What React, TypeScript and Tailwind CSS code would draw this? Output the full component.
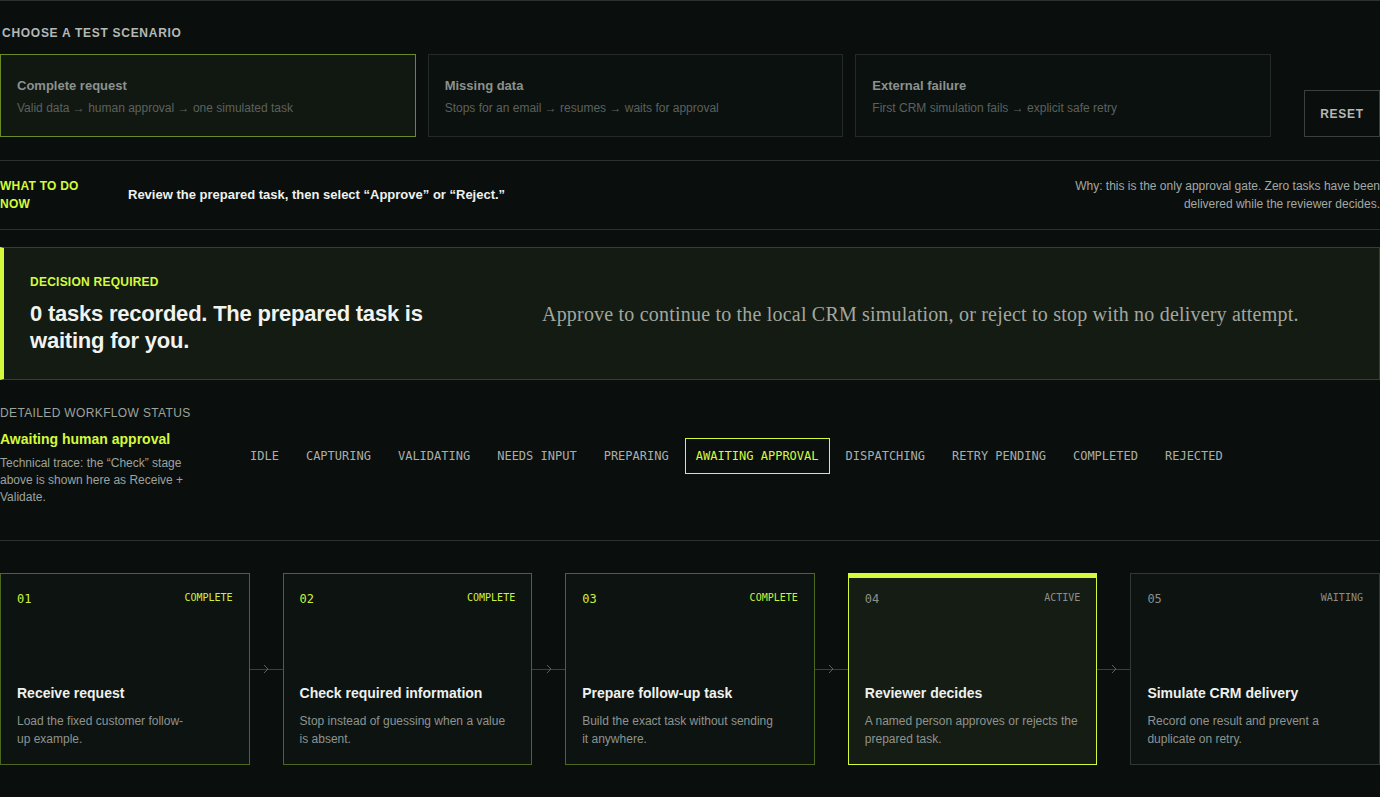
import React from "react";

const sans = "font-['Liberation_Sans','Helvetica_Neue',Arial,sans-serif]";
const mono = "font-['DejaVu_Sans_Mono','Liberation_Mono',monospace]";

const scenarios = [
  { title: "Complete request", sub: "Valid data → human approval → one simulated task", active: true },
  { title: "Missing data", sub: "Stops for an email → resumes → waits for approval", active: false },
  { title: "External failure", sub: "First CRM simulation fails → explicit safe retry", active: false },
];

const states = [
  "IDLE",
  "CAPTURING",
  "VALIDATING",
  "NEEDS INPUT",
  "PREPARING",
  "AWAITING APPROVAL",
  "DISPATCHING",
  "RETRY PENDING",
  "COMPLETED",
  "REJECTED",
];

type Step = { n: string; status: string; title: string; desc: string; kind: "done" | "active" | "wait" };
const steps: Step[] = [
  { n: "01", status: "COMPLETE", title: "Receive request", desc: "Load the fixed customer follow-up example.", kind: "done" },
  { n: "02", status: "COMPLETE", title: "Check required information", desc: "Stop instead of guessing when a value is absent.", kind: "done" },
  { n: "03", status: "COMPLETE", title: "Prepare follow-up task", desc: "Build the exact task without sending it anywhere.", kind: "done" },
  { n: "04", status: "ACTIVE", title: "Reviewer decides", desc: "A named person approves or rejects the prepared task.", kind: "active" },
  { n: "05", status: "WAITING", title: "Simulate CRM delivery", desc: "Record one result and prevent a duplicate on retry.", kind: "wait" },
];

function Connector() {
  return (
    <div className="relative w-[33px] shrink-0 self-stretch flex items-center">
      <div className="h-px w-full bg-[#3a403c]" />
      <svg
        className="absolute left-1/2 top-1/2 -translate-x-1/2 -translate-y-1/2"
        width="7"
        height="10"
        viewBox="0 0 7 10"
      >
        <path d="M1.5 1 L5.5 5 L1.5 9" fill="none" stroke="#5a605c" strokeWidth="1" />
      </svg>
    </div>
  );
}

function StepCard({ s }: { s: Step }) {
  const border =
    s.kind === "done" ? "border-[#4d6620]" : s.kind === "active" ? "border-[#d4fa3c]" : "border-[#323834]";
  const bg = s.kind === "active" ? "bg-[#151c13]" : "bg-[#0d1311]";
  const topColor = s.kind === "done" ? "text-[#cdf23c]" : "text-[#8a8f8c]";
  return (
    <div className={`relative flex-1 h-[192px] border ${border} ${bg} flex flex-col justify-between px-[16px] pt-[17px] pb-[16px]`}>
      {s.kind === "active" && <div className="absolute left-0 right-0 top-0 h-[4px] bg-[#d4fa3c]" />}
      <div className="flex items-start justify-between">
        <span className={`${mono} text-[12px] leading-[16px] ${topColor}`}>{s.n}</span>
        <span className={`${mono} text-[10px] leading-[14px] ${topColor}`}>{s.status}</span>
      </div>
      <div>
        <div className="text-[14px] leading-[20px] font-bold text-[#eef1ee]">{s.title}</div>
        <div className="mt-[9px] text-[12px] leading-[18px] text-[#8e938f] text-pretty">{s.desc}</div>
      </div>
    </div>
  );
}

export default function App() {
  return (
    <div className={`${sans} min-h-[797px] w-[1380px] bg-[#0a0f0d] text-[#e8ece9] overflow-hidden`}>
      {/* Scenario section */}
      <div className="border-t border-[#2c322f] pt-[24px]">
        <div className="pl-[2px] text-[12px] leading-[16px] font-bold tracking-[0.06em] text-[#b4b9b6]">
          CHOOSE A TEST SCENARIO
        </div>
        <div className="mt-[13px] flex items-end gap-3">
          {scenarios.map((sc) => (
            <div
              key={sc.title}
              className={`flex-1 h-[83px] border flex flex-col justify-center px-[16px] ${
                sc.active ? "border-[#6a8a28] bg-[#111811]" : "border-[#242a27] bg-[#0b110f]"
              }`}
            >
              <div className="text-[13px] leading-[20px] font-bold text-[#8c918e]">{sc.title}</div>
              <div className="mt-[4px] text-[12px] leading-[16px] text-[#5b615d]">{sc.sub}</div>
            </div>
          ))}
          <div className="ml-[21px] w-[76px] h-[47px] shrink-0 border border-[#3a403c] flex items-center justify-center text-[12px] font-bold tracking-[0.06em] text-[#b4b9b6]">
            RESET
          </div>
        </div>
      </div>

      {/* What to do */}
      <div className="mt-[23px] border-t border-b border-[#2c322f] h-[70px] flex items-center">
        <div className="w-[128px] shrink-0 text-[12px] leading-[18px] font-bold tracking-[0.02em] text-[#d4fa3c]">
          WHAT TO DO
          <br />
          NOW
        </div>
        <div className="text-[13px] font-semibold text-[#eef1ee]">
          Review the prepared task, then select “Approve” or “Reject.”
        </div>
        <div className="ml-auto text-right text-[12px] leading-[18px] text-[#a3a8a5]">
          Why: this is the only approval gate. Zero tasks have been
          <br />
          delivered while the reviewer decides.
        </div>
      </div>

      {/* Decision panel */}
      <div className="mt-[17px] h-[133px] border border-[#363c38] border-l-[4px] border-l-[#d4fa3c] bg-[#141b13] grid grid-cols-[430px_1fr] gap-[82px] items-center pl-[26px]">
        <div>
          <div className="text-[12px] leading-[16px] font-bold tracking-[0.02em] text-[#d4fa3c]">DECISION REQUIRED</div>
          <div className="mt-[10px] text-[22px] leading-[27px] font-bold tracking-[-0.01em] text-[#f1f3f0]">
            0 tasks recorded. The prepared task is waiting for you.
          </div>
        </div>
        <div className="font-['Liberation_Serif','DejaVu_Serif',serif] text-[20px] leading-[26px] text-[#a2a79f] tracking-[0.2px]">
          Approve to continue to the local CRM simulation, or reject to stop with no delivery attempt.
        </div>
      </div>

      {/* Workflow status */}
      <div className="mt-[25px] grid grid-cols-[200px_1fr] gap-[39px] items-center pb-[34px] border-b border-[#2c322f]">
        <div>
          <div className="text-[12px] leading-[16px] tracking-[0.03em] text-[#9da29f]">DETAILED WORKFLOW STATUS</div>
          <div className="mt-[8px] text-[14px] leading-[20px] font-bold text-[#d4fa3c]">Awaiting human approval</div>
          <div className="mt-[6px] text-[12px] leading-[17px] text-[#9da29f] pr-[10px]">
            Technical trace: the “Check” stage above is shown here as Receive + Validate.
          </div>
        </div>
        <div className="flex items-center gap-[5px]">
          {states.map((st) => {
            const active = st === "AWAITING APPROVAL";
            return (
              <div
                key={st}
                className={`${mono} text-[12px] leading-[16px] px-[10px] py-[9px] border whitespace-nowrap ${
                  active ? "border-[#d4fa3c] text-[#d4fa3c]" : "border-transparent text-[#a9aeab]"
                }`}
              >
                {st}
              </div>
            );
          })}
        </div>
      </div>

      {/* Steps */}
      <div className="mt-[32px] flex">
        {steps.map((s, i) => (
          <React.Fragment key={s.n}>
            {i > 0 && <Connector />}
            <StepCard s={s} />
          </React.Fragment>
        ))}
      </div>
    </div>
  );
}
